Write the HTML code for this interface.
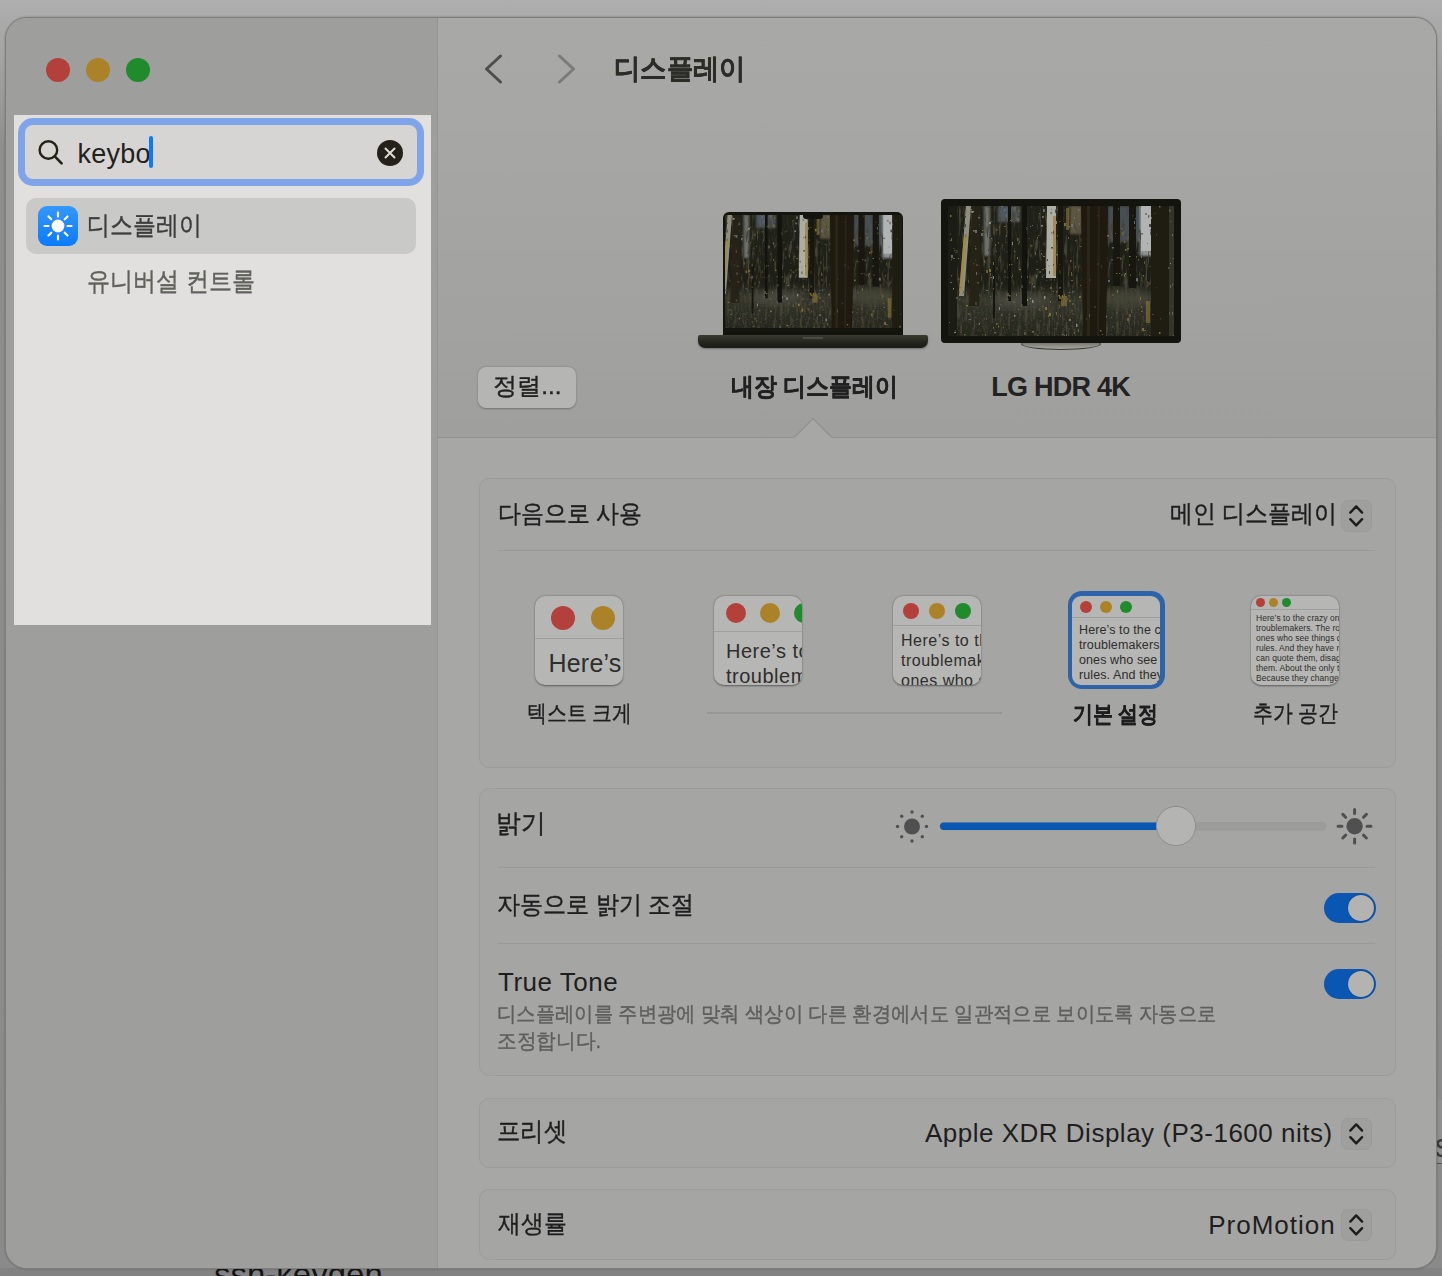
<!DOCTYPE html>
<html><head><meta charset="utf-8">
<style>
*{box-sizing:border-box;margin:0;padding:0}
html,body{width:1442px;height:1276px;overflow:hidden}
body{position:relative;font-family:"Liberation Sans",sans-serif;background:linear-gradient(#afafaf 0,#aaaaaa 20px,#a6a6a6 50px,#8e8e8e 150px,#8a8a8a 100%);color:#1e1e1e}
.abs{position:absolute}
#win{position:absolute;left:5px;top:17px;width:1432px;height:1252px;border-radius:22px;background:#a7a7a6;border:1px solid #7e7e7c;overflow:hidden;box-shadow:0 0 2px rgba(0,0,0,.3)}
#side{position:absolute;left:0;top:0;width:432px;height:100%;background:#9e9e9d;border-right:1px solid #959594}
#hdr{position:absolute;left:432px;top:0;right:0;height:420px;background:linear-gradient(#a8a8a7,#a7a7a6 22%,#9f9f9e);border-bottom:1px solid #90908f}
.tl{position:absolute;top:40px;width:24px;height:24px;border-radius:50%}
.t{position:absolute;white-space:nowrap;line-height:1;transform-origin:0 0}
.card{position:absolute;left:479px;width:917px;border-radius:10px;background:#a5a5a4;border:1px solid #9b9b9a}
.sep{position:absolute;left:498px;width:877px;height:1px;background:#999998}
.stepper{position:absolute;left:1341px;width:31px;height:32px;border-radius:7px;background:#9f9f9e;border:1px solid #9a9a99}
.toggle{position:absolute;left:1324px;width:52px;height:30px;border-radius:15px;background:#0a56b3}
.toggle::after{content:"";position:absolute;right:2px;top:2px;width:26px;height:26px;border-radius:50%;background:#b3b3b2;box-shadow:0 0 1px rgba(0,0,0,.5)}
.thumb{position:absolute;width:88px;height:89px;border-radius:10px;background:#b6b6b5;box-shadow:0 0.5px 2px rgba(0,0,0,.45);overflow:hidden}
.thumb .bar{position:absolute;left:0;right:0;height:1px;background:#9f9f9e}
.dot{position:absolute;border-radius:50%}
.r{background:#b3403a}.y{background:#ac8228}.g{background:#1f8b2d}
.t[style*="scaleX"]{-webkit-text-stroke:0.4px currentColor}
.t[style*="bold"][style*="scaleX"]{-webkit-text-stroke:0.3px currentColor}
.tt{position:absolute;color:#2e2e2a;white-space:nowrap}
</style></head><body>

<svg width="0" height="0" style="position:absolute">
 <defs>
  <g id="forestg">
<filter id="fn" color-interpolation-filters="sRGB" x="0" y="0" width="100%" height="100%"><feTurbulence type="fractalNoise" baseFrequency="0.35 0.06" numOctaves="3" seed="4"/><feColorMatrix values="0 0 0 0 0.27  0 0 0 0 0.26  0 0 0 0 0.2  0 0 0 -4 1.95"/></filter>
<filter id="fn2" color-interpolation-filters="sRGB" x="0" y="0" width="100%" height="100%"><feTurbulence type="fractalNoise" baseFrequency="0.5 0.5" numOctaves="2" seed="9"/><feColorMatrix values="0 0 0 0 0.3  0 0 0 0 0.3  0 0 0 0 0.24  0 0 0 -4 2.0"/></filter>
<linearGradient id="fg" x1="0" y1="0" x2="0" y2="1"><stop offset="0" stop-color="#202119"/><stop offset="0.6" stop-color="#1d1e16"/><stop offset="0.72" stop-color="#34352b"/><stop offset="0.85" stop-color="#2c2d24"/><stop offset="1" stop-color="#23241c"/></linearGradient>
<rect width="226" height="130" fill="url(#fg)"/>
<filter id="fs"><feGaussianBlur stdDeviation="1.2"/></filter><g filter="url(#fs)">
<rect x="50" y="0" width="22" height="16" fill="#4f5860"/>
<rect x="36" y="0" width="6" height="50" fill="#6d706c"/>
<rect x="160" y="0" width="32" height="36" fill="#464f55"/>
<rect x="192" y="0" width="12" height="50" fill="#8e9394"/>
<rect x="0" y="0" width="8" height="12" fill="#3b3f3c"/>
<rect x="122" y="0" width="12" height="28" fill="#5d5640"/>
</g>
<rect width="226" height="130" filter="url(#fn)"/>
<filter id="fb"><feGaussianBlur stdDeviation="4"/></filter>
<ellipse cx="72" cy="95" rx="30" ry="8" fill="#4d4e44" opacity="0.7" filter="url(#fb)"/>
<ellipse cx="180" cy="92" rx="24" ry="10" fill="#48483a" opacity="0.7" filter="url(#fb)"/>
<rect y="86" width="226" height="44" filter="url(#fn2)" opacity="0.5"/>
<polygon points="18,0 23,0 16,90 11,90" fill="#8f8e80"/>
<polygon points="16,30 19,30 14,85 11,85" fill="#a08a3a" opacity="0.8"/>
<polygon points="24,0 33,0 31,100 21,100" fill="#262216"/>
<polygon points="60,0 63,0 63,95 60,95" fill="#13130e"/>
<polygon points="74,0 79,0 79,100 74,100" fill="#13130e"/>
<polygon points="45,55 47,55 47,112 45,112" fill="#15150f"/>
<polygon points="99,0 108,0 108,72 98,72" fill="#aeada2"/>
<polygon points="105,10 108,10 108,70 105,70" fill="#9a8446" opacity="0.8"/>
<polygon points="110,0 115,0 115,95 110,95" fill="#17160f"/>
<polygon points="133,0 160,0 158,130 135,130" fill="#1e1a10"/>
<polygon points="139,0 142,0 142,130 139,130" fill="#2c2617"/>
<polygon points="150,0 152,0 151,130 149,130" fill="#29231a"/>
<polygon points="165,0 172,0 172,80 165,80" fill="#17160f"/>
<polygon points="181,0 188,0 188,82 181,82" fill="#17160f"/>
<polygon points="193,0 203,0 203,45 193,45" fill="#b0b4b4"/>
<polygon points="203,0 221,0 221,130 203,130" fill="#1f1c12"/>
<polygon points="221,0 226,0 226,130 221,130" fill="#36342a"/>
<polygon points="0,0 9,0 9,130 0,130" fill="#1b1c15"/>
<rect x="113" y="90" width="6" height="10" fill="#8e7634" opacity="0.6"/>
<rect x="198" y="95" width="4" height="22" fill="#8e7634" opacity="0.6"/>
<rect x="118" y="2" width="3" height="22" fill="#8e7634" opacity="0.6"/>
<rect x="102" y="73" width="2" height="1.5" fill="#4a4636" opacity="0.85"/>
<rect x="42" y="67" width="1" height="3" fill="#5e5a48" opacity="0.85"/>
<rect x="69" y="12" width="2" height="3" fill="#7a6a38" opacity="0.85"/>
<rect x="3" y="69" width="1" height="1.5" fill="#7a6a38" opacity="0.85"/>
<rect x="199" y="78" width="1.5" height="3" fill="#4a4636" opacity="0.85"/>
<rect x="66" y="1" width="1.5" height="3" fill="#7a6a38" opacity="0.85"/>
<rect x="225" y="129" width="1.5" height="2" fill="#7a6a38" opacity="0.85"/>
<rect x="171" y="67" width="1" height="1" fill="#7a6a38" opacity="0.85"/>
<rect x="90" y="110" width="1" height="1" fill="#3c3a2c" opacity="0.85"/>
<rect x="191" y="0" width="1" height="3" fill="#8c7a3a" opacity="0.85"/>
<rect x="85" y="92" width="1" height="1.5" fill="#4a4636" opacity="0.85"/>
<rect x="176" y="35" width="1.5" height="2" fill="#7a6a38" opacity="0.85"/>
<rect x="3" y="53" width="1" height="1.5" fill="#5e5a48" opacity="0.85"/>
<rect x="110" y="89" width="2" height="1.5" fill="#8c7a3a" opacity="0.85"/>
<rect x="223" y="100" width="2" height="1" fill="#4a4636" opacity="0.85"/>
<rect x="89" y="129" width="1.5" height="2" fill="#7a6a38" opacity="0.85"/>
<rect x="226" y="3" width="1" height="1" fill="#5e5a48" opacity="0.85"/>
<rect x="224" y="28" width="1" height="2" fill="#6e737a" opacity="0.85"/>
<rect x="188" y="50" width="1" height="1.5" fill="#7a6a38" opacity="0.85"/>
<rect x="132" y="32" width="1.5" height="3" fill="#3c3a2c" opacity="0.85"/>
<rect x="29" y="76" width="2" height="1.5" fill="#5e5a48" opacity="0.85"/>
<rect x="88" y="63" width="2" height="1" fill="#7a6a38" opacity="0.85"/>
<rect x="23" y="5" width="2" height="2" fill="#6a7888" opacity="0.85"/>
<rect x="95" y="118" width="1.5" height="1.5" fill="#4a4636" opacity="0.85"/>
<rect x="108" y="85" width="1.5" height="1.5" fill="#7a6a38" opacity="0.85"/>
<rect x="61" y="58" width="1" height="1.5" fill="#7a6a38" opacity="0.85"/>
<rect x="64" y="69" width="1" height="2" fill="#5e5a48" opacity="0.85"/>
<rect x="31" y="59" width="1" height="1" fill="#3c3a2c" opacity="0.85"/>
<rect x="70" y="4" width="1.5" height="2" fill="#7a6a38" opacity="0.85"/>
<rect x="31" y="9" width="1" height="1.5" fill="#4a4636" opacity="0.85"/>
<rect x="179" y="119" width="1" height="3" fill="#3c3a2c" opacity="0.85"/>
<rect x="179" y="112" width="2" height="3" fill="#7a6a38" opacity="0.85"/>
<rect x="132" y="79" width="1" height="1" fill="#7a6a38" opacity="0.85"/>
<rect x="224" y="114" width="2" height="3" fill="#3c3a2c" opacity="0.85"/>
<rect x="100" y="109" width="1" height="2" fill="#7a6a38" opacity="0.85"/>
<rect x="68" y="88" width="1" height="2" fill="#8c7a3a" opacity="0.85"/>
<rect x="149" y="57" width="2" height="2" fill="#3c3a2c" opacity="0.85"/>
<rect x="45" y="56" width="1" height="3" fill="#8c7a3a" opacity="0.85"/>
<rect x="50" y="120" width="1" height="1.5" fill="#8c7a3a" opacity="0.85"/>
<rect x="112" y="109" width="1" height="2" fill="#7a6a38" opacity="0.85"/>
<rect x="186" y="15" width="1" height="3" fill="#6a7888" opacity="0.85"/>
<rect x="86" y="68" width="2" height="2" fill="#3c3a2c" opacity="0.85"/>
<rect x="17" y="4" width="1.5" height="2" fill="#7a6a38" opacity="0.85"/>
<rect x="70" y="103" width="1" height="3" fill="#7a6a38" opacity="0.85"/>
<rect x="103" y="3" width="1" height="1" fill="#6a7888" opacity="0.85"/>
<rect x="222" y="15" width="1.5" height="1" fill="#5e5a48" opacity="0.85"/>
<rect x="40" y="1" width="1" height="1.5" fill="#4a4636" opacity="0.85"/>
<rect x="51" y="101" width="1" height="3" fill="#9a9a90" opacity="0.85"/>
<rect x="192" y="91" width="1" height="3" fill="#8c7a3a" opacity="0.85"/>
<rect x="102" y="81" width="2" height="2" fill="#7a6a38" opacity="0.85"/>
<rect x="105" y="85" width="1" height="1" fill="#8c7a3a" opacity="0.85"/>
<rect x="48" y="117" width="1.5" height="2" fill="#7a6a38" opacity="0.85"/>
<rect x="59" y="93" width="1.5" height="1" fill="#7a6a38" opacity="0.85"/>
<rect x="8" y="44" width="1.5" height="3" fill="#4a4636" opacity="0.85"/>
<rect x="208" y="28" width="1" height="1.5" fill="#4a4636" opacity="0.85"/>
<rect x="120" y="89" width="2" height="1.5" fill="#5e5a48" opacity="0.85"/>
<rect x="226" y="117" width="2" height="3" fill="#9a9a90" opacity="0.85"/>
<rect x="131" y="90" width="2" height="2" fill="#8c7a3a" opacity="0.85"/>
<rect x="188" y="73" width="1.5" height="2" fill="#5e5a48" opacity="0.85"/>
<rect x="152" y="124" width="1.5" height="1.5" fill="#8c7a3a" opacity="0.85"/>
<rect x="45" y="70" width="1" height="3" fill="#9a9a90" opacity="0.85"/>
<rect x="6" y="126" width="2" height="1" fill="#9a9a90" opacity="0.85"/>
<rect x="111" y="90" width="2" height="3" fill="#7a6a38" opacity="0.85"/>
<rect x="56" y="64" width="2" height="3" fill="#3c3a2c" opacity="0.85"/>
<rect x="119" y="14" width="1.5" height="1.5" fill="#4a4636" opacity="0.85"/>
<rect x="35" y="2" width="1.5" height="1.5" fill="#3c3a2c" opacity="0.85"/>
<rect x="28" y="66" width="1" height="3" fill="#6e737a" opacity="0.85"/>
<rect x="5" y="82" width="1" height="1.5" fill="#9a9a90" opacity="0.85"/>
<rect x="195" y="69" width="1" height="1.5" fill="#8c7a3a" opacity="0.85"/>
<rect x="53" y="96" width="1" height="2" fill="#3c3a2c" opacity="0.85"/>
<rect x="176" y="25" width="1" height="1.5" fill="#5e5a48" opacity="0.85"/>
<rect x="30" y="11" width="2" height="1.5" fill="#6a7888" opacity="0.85"/>
<rect x="45" y="82" width="1" height="1.5" fill="#7a6a38" opacity="0.85"/>
<rect x="129" y="46" width="1" height="2" fill="#3c3a2c" opacity="0.85"/>
<rect x="114" y="89" width="1" height="3" fill="#8c7a3a" opacity="0.85"/>
<rect x="24" y="5" width="2" height="1.5" fill="#9a9a90" opacity="0.85"/>
<rect x="43" y="15" width="1.5" height="1" fill="#5e5a48" opacity="0.85"/>
<rect x="131" y="17" width="1" height="2" fill="#6a7888" opacity="0.85"/>
<rect x="88" y="55" width="2" height="1.5" fill="#3c3a2c" opacity="0.85"/>
<rect x="191" y="24" width="1.5" height="3" fill="#4a4636" opacity="0.85"/>
<rect x="179" y="42" width="2" height="1.5" fill="#7a6a38" opacity="0.85"/>
<rect x="114" y="128" width="1.5" height="1" fill="#6e737a" opacity="0.85"/>
<rect x="168" y="101" width="1" height="2" fill="#3c3a2c" opacity="0.85"/>
<rect x="199" y="90" width="1" height="3" fill="#4a4636" opacity="0.85"/>
<rect x="47" y="24" width="1" height="1" fill="#3c3a2c" opacity="0.85"/>
<rect x="201" y="129" width="1" height="2" fill="#7a6a38" opacity="0.85"/>
<rect x="88" y="130" width="1" height="3" fill="#8c7a3a" opacity="0.85"/>
<rect x="221" y="3" width="1.5" height="3" fill="#5e5a48" opacity="0.85"/>
<rect x="91" y="7" width="1" height="1" fill="#8c7a3a" opacity="0.85"/>
<rect x="58" y="36" width="2" height="1" fill="#3c3a2c" opacity="0.85"/>
<rect x="38" y="64" width="2" height="3" fill="#7a6a38" opacity="0.85"/>
<rect x="95" y="68" width="1.5" height="2" fill="#3c3a2c" opacity="0.85"/>
<rect x="109" y="35" width="1.5" height="1" fill="#3c3a2c" opacity="0.85"/>
<rect x="3" y="32" width="1" height="3" fill="#7a6a38" opacity="0.85"/>
<rect x="171" y="51" width="2" height="1" fill="#3c3a2c" opacity="0.85"/>
<rect x="131" y="94" width="1" height="1.5" fill="#3c3a2c" opacity="0.85"/>
<rect x="97" y="62" width="1" height="1" fill="#8c7a3a" opacity="0.85"/>
<rect x="221" y="106" width="1" height="3" fill="#5e5a48" opacity="0.85"/>
<rect x="103" y="26" width="1.5" height="1.5" fill="#7a6a38" opacity="0.85"/>
<rect x="28" y="58" width="2" height="2" fill="#4a4636" opacity="0.85"/>
<rect x="168" y="106" width="1.5" height="1.5" fill="#5e5a48" opacity="0.85"/>
<rect x="54" y="15" width="1.5" height="2" fill="#3c3a2c" opacity="0.85"/>
<rect x="61" y="89" width="1.5" height="1.5" fill="#8c7a3a" opacity="0.85"/>
<rect x="43" y="32" width="1" height="1" fill="#8c7a3a" opacity="0.85"/>
<rect x="2" y="34" width="1" height="1" fill="#7a6a38" opacity="0.85"/>
<rect x="50" y="36" width="1" height="1.5" fill="#7a6a38" opacity="0.85"/>
<rect x="48" y="45" width="1" height="1" fill="#5e5a48" opacity="0.85"/>
<rect x="101" y="107" width="2" height="3" fill="#8c7a3a" opacity="0.85"/>
<rect x="169" y="51" width="1.5" height="1.5" fill="#5e5a48" opacity="0.85"/>
<rect x="124" y="97" width="2" height="2" fill="#5e5a48" opacity="0.85"/>
<rect x="131" y="60" width="1" height="1" fill="#3c3a2c" opacity="0.85"/>
<rect x="98" y="74" width="1.5" height="1" fill="#4a4636" opacity="0.85"/>
<rect x="17" y="28" width="1.5" height="3" fill="#7a6a38" opacity="0.85"/>
<rect x="164" y="90" width="1" height="1.5" fill="#3c3a2c" opacity="0.85"/>
<rect x="81" y="94" width="1" height="2" fill="#3c3a2c" opacity="0.85"/>
<rect x="160" y="74" width="2" height="2" fill="#6e737a" opacity="0.85"/>
<rect x="104" y="29" width="1" height="1" fill="#9a9a90" opacity="0.85"/>
<rect x="82" y="48" width="2" height="3" fill="#3c3a2c" opacity="0.85"/>
<rect x="180" y="96" width="2" height="1.5" fill="#3c3a2c" opacity="0.85"/>
<rect x="189" y="73" width="1" height="3" fill="#5e5a48" opacity="0.85"/>
<rect x="199" y="37" width="1" height="1" fill="#7a6a38" opacity="0.85"/>
<rect x="123" y="74" width="2" height="1" fill="#7a6a38" opacity="0.85"/>
<rect x="132" y="40" width="1.5" height="1" fill="#7a6a38" opacity="0.85"/>
<rect x="62" y="14" width="1" height="1" fill="#6a7888" opacity="0.85"/>
<rect x="169" y="84" width="1" height="3" fill="#8c7a3a" opacity="0.85"/>
<rect x="173" y="68" width="2" height="2" fill="#4a4636" opacity="0.85"/>
<rect x="76" y="126" width="2" height="3" fill="#5e5a48" opacity="0.85"/>
<rect x="121" y="94" width="2" height="2" fill="#7a6a38" opacity="0.85"/>
<rect x="193" y="105" width="2" height="1" fill="#7a6a38" opacity="0.85"/>
<rect x="118" y="92" width="2" height="3" fill="#5e5a48" opacity="0.85"/>
<rect x="88" y="69" width="1" height="3" fill="#6e737a" opacity="0.85"/>
<rect x="70" y="15" width="1" height="1" fill="#5e5a48" opacity="0.85"/>
<rect x="170" y="2" width="1" height="2" fill="#4a4636" opacity="0.85"/>
<rect x="25" y="24" width="2" height="1.5" fill="#8c7a3a" opacity="0.85"/>
<rect x="100" y="116" width="1" height="2" fill="#3c3a2c" opacity="0.85"/>
<rect x="193" y="63" width="1.5" height="1" fill="#3c3a2c" opacity="0.85"/>
<rect x="109" y="29" width="1" height="1.5" fill="#7a6a38" opacity="0.85"/>
<rect x="181" y="50" width="1.5" height="1" fill="#9a9a90" opacity="0.85"/>
<rect x="107" y="48" width="2" height="1.5" fill="#8c7a3a" opacity="0.85"/>
<rect x="94" y="100" width="1.5" height="1.5" fill="#5e5a48" opacity="0.85"/>
<rect x="121" y="20" width="1" height="1.5" fill="#6a7888" opacity="0.85"/>
<rect x="19" y="35" width="1" height="3" fill="#9a9a90" opacity="0.85"/>
<rect x="123" y="66" width="1" height="3" fill="#7a6a38" opacity="0.85"/>
<rect x="44" y="89" width="1" height="1" fill="#4a4636" opacity="0.85"/>
<rect x="123" y="68" width="1.5" height="2" fill="#5e5a48" opacity="0.85"/>
<rect x="70" y="10" width="1" height="2" fill="#3c3a2c" opacity="0.85"/>
<rect x="17" y="18" width="1" height="3" fill="#3c3a2c" opacity="0.85"/>
<rect x="3" y="49" width="1" height="2" fill="#4a4636" opacity="0.85"/>
<rect x="127" y="60" width="1" height="1.5" fill="#7a6a38" opacity="0.85"/>
<rect x="66" y="49" width="1.5" height="3" fill="#3c3a2c" opacity="0.85"/>
<rect x="126" y="11" width="1" height="2" fill="#6a7888" opacity="0.85"/>
<rect x="70" y="36" width="1.5" height="3" fill="#4a4636" opacity="0.85"/>
<rect x="187" y="12" width="1" height="1.5" fill="#5e5a48" opacity="0.85"/>
<rect x="41" y="52" width="1" height="1" fill="#4a4636" opacity="0.85"/>
<rect x="51" y="20" width="1" height="2" fill="#5e5a48" opacity="0.85"/>
<rect x="146" y="100" width="2" height="2" fill="#3c3a2c" opacity="0.85"/>
<rect x="208" y="81" width="1" height="1" fill="#3c3a2c" opacity="0.85"/>
<rect x="59" y="25" width="1" height="3" fill="#3c3a2c" opacity="0.85"/>
<rect x="46" y="43" width="1" height="1.5" fill="#3c3a2c" opacity="0.85"/>
<rect x="57" y="70" width="1" height="2" fill="#3c3a2c" opacity="0.85"/>
<rect x="45" y="121" width="1" height="1.5" fill="#8c7a3a" opacity="0.85"/>
<rect x="176" y="18" width="1.5" height="2" fill="#4a4636" opacity="0.85"/>
<rect x="21" y="113" width="2" height="1" fill="#6e737a" opacity="0.85"/>
<rect x="102" y="95" width="1" height="2" fill="#8c7a3a" opacity="0.85"/>
<rect x="38" y="97" width="1" height="1" fill="#3c3a2c" opacity="0.85"/>
<rect x="211" y="0" width="1.5" height="1.5" fill="#6a7888" opacity="0.85"/>
<rect x="42" y="71" width="2" height="1" fill="#7a6a38" opacity="0.85"/>
<rect x="91" y="102" width="1.5" height="3" fill="#5e5a48" opacity="0.85"/>
<rect x="36" y="54" width="1" height="3" fill="#7a6a38" opacity="0.85"/>
<rect x="27" y="53" width="1" height="2" fill="#3c3a2c" opacity="0.85"/>
<rect x="55" y="121" width="1" height="1.5" fill="#7a6a38" opacity="0.85"/>
<rect x="91" y="65" width="2" height="2" fill="#5e5a48" opacity="0.85"/>
<rect x="93" y="81" width="1.5" height="3" fill="#4a4636" opacity="0.85"/>
<rect x="201" y="60" width="2" height="1" fill="#4a4636" opacity="0.85"/>
<rect x="128" y="118" width="1.5" height="3" fill="#9a9a90" opacity="0.85"/>
<rect x="95" y="3" width="2" height="3" fill="#6a7888" opacity="0.85"/>
<rect x="101" y="65" width="1" height="3" fill="#3c3a2c" opacity="0.85"/>
<rect x="69" y="51" width="1" height="2" fill="#8c7a3a" opacity="0.85"/>
<rect x="196" y="55" width="1" height="3" fill="#5e5a48" opacity="0.85"/>
<rect x="128" y="117" width="1" height="1" fill="#5e5a48" opacity="0.85"/>
<rect x="199" y="75" width="1" height="2" fill="#4a4636" opacity="0.85"/>
<rect x="55" y="39" width="1" height="1" fill="#3c3a2c" opacity="0.85"/>
<rect x="100" y="59" width="2" height="1.5" fill="#9a9a90" opacity="0.85"/>
<rect x="81" y="76" width="1.5" height="1" fill="#7a6a38" opacity="0.85"/>
<rect x="103" y="41" width="2" height="1.5" fill="#3c3a2c" opacity="0.85"/>
<rect x="47" y="38" width="1" height="2" fill="#7a6a38" opacity="0.85"/>
<rect x="189" y="46" width="1" height="1.5" fill="#4a4636" opacity="0.85"/>
<rect x="120" y="31" width="1" height="2" fill="#7a6a38" opacity="0.85"/>
<rect x="164" y="41" width="2" height="1.5" fill="#6e737a" opacity="0.85"/>
<rect x="76" y="124" width="2" height="1" fill="#4a4636" opacity="0.85"/>
<rect x="38" y="112" width="1" height="2" fill="#5e5a48" opacity="0.85"/>
<rect x="41" y="31" width="1.5" height="2" fill="#3c3a2c" opacity="0.85"/>
<rect x="182" y="68" width="1" height="2" fill="#5e5a48" opacity="0.85"/>
<rect x="202" y="23" width="1" height="3" fill="#6a7888" opacity="0.85"/>
<rect x="222" y="57" width="1" height="1" fill="#9a9a90" opacity="0.85"/>
<rect x="2" y="76" width="2" height="1" fill="#6e737a" opacity="0.85"/>
<rect x="37" y="128" width="1" height="1.5" fill="#8c7a3a" opacity="0.85"/>
<rect x="63" y="71" width="1" height="1" fill="#5e5a48" opacity="0.85"/>
<rect x="1" y="116" width="1" height="1" fill="#7a6a38" opacity="0.85"/>
<rect x="126" y="84" width="1.5" height="3" fill="#3c3a2c" opacity="0.85"/>
<rect x="177" y="67" width="1" height="1.5" fill="#9a9a90" opacity="0.85"/>
<rect x="25" y="57" width="1.5" height="1.5" fill="#4a4636" opacity="0.85"/>
<rect x="59" y="71" width="1.5" height="1" fill="#4a4636" opacity="0.85"/>
<rect x="46" y="126" width="2" height="1.5" fill="#7a6a38" opacity="0.85"/>
<rect x="73" y="79" width="2" height="3" fill="#4a4636" opacity="0.85"/>
<rect x="163" y="111" width="1" height="1" fill="#7a6a38" opacity="0.85"/>
<rect x="179" y="31" width="1" height="2" fill="#5e5a48" opacity="0.85"/>
<rect x="96" y="90" width="1.5" height="3" fill="#9a9a90" opacity="0.85"/>
<rect x="20" y="107" width="2" height="2" fill="#5e5a48" opacity="0.85"/>
<rect x="56" y="65" width="1" height="2" fill="#4a4636" opacity="0.85"/>
<rect x="93" y="47" width="1" height="1.5" fill="#8c7a3a" opacity="0.85"/>
<rect x="111" y="99" width="1" height="3" fill="#5e5a48" opacity="0.85"/>
<rect x="118" y="128" width="1" height="3" fill="#7a6a38" opacity="0.85"/>
<rect x="201" y="18" width="2" height="3" fill="#3c3a2c" opacity="0.85"/>
<rect x="211" y="126" width="1.5" height="2" fill="#8c7a3a" opacity="0.85"/>
<rect x="27" y="111" width="2" height="1" fill="#4a4636" opacity="0.85"/>
<rect x="222" y="79" width="1" height="3" fill="#7a6a38" opacity="0.85"/>
<rect x="132" y="129" width="1" height="3" fill="#3c3a2c" opacity="0.85"/>
<rect x="194" y="122" width="2" height="3" fill="#8c7a3a" opacity="0.85"/>
<rect x="177" y="28" width="1" height="1.5" fill="#3c3a2c" opacity="0.85"/>
<rect x="179" y="105" width="1" height="3" fill="#4a4636" opacity="0.85"/>
<rect x="48" y="61" width="2" height="3" fill="#3c3a2c" opacity="0.85"/>
<rect x="111" y="81" width="2" height="1.5" fill="#5e5a48" opacity="0.85"/>
<rect x="122" y="54" width="1.5" height="2" fill="#7a6a38" opacity="0.85"/>
<rect x="168" y="67" width="1.5" height="1" fill="#8c7a3a" opacity="0.85"/>
<rect x="82" y="20" width="1" height="1" fill="#6a7888" opacity="0.85"/>
<rect x="5" y="42" width="2" height="1" fill="#3c3a2c" opacity="0.85"/>
<rect x="193" y="50" width="1" height="2" fill="#6e737a" opacity="0.85"/>
<rect x="89" y="31" width="1" height="1.5" fill="#7a6a38" opacity="0.85"/>
<rect x="116" y="17" width="2" height="3" fill="#8c7a3a" opacity="0.85"/>
<rect x="123" y="18" width="2" height="3" fill="#6e737a" opacity="0.85"/>
<rect x="33" y="27" width="2" height="3" fill="#6e737a" opacity="0.85"/>
<rect x="31" y="67" width="1" height="1" fill="#3c3a2c" opacity="0.85"/>
<rect x="66" y="45" width="1" height="1" fill="#8c7a3a" opacity="0.85"/>
<rect x="192" y="97" width="1" height="2" fill="#4a4636" opacity="0.85"/>
<rect x="149" y="9" width="1.5" height="1.5" fill="#3c3a2c" opacity="0.85"/>
<rect x="177" y="34" width="1" height="3" fill="#4a4636" opacity="0.85"/>
<rect x="111" y="64" width="1.5" height="3" fill="#3c3a2c" opacity="0.85"/>
<rect x="159" y="29" width="2" height="1.5" fill="#8c7a3a" opacity="0.85"/>
<rect x="79" y="93" width="1" height="2" fill="#9a9a90" opacity="0.85"/>
<rect x="58" y="111" width="1" height="3" fill="#3c3a2c" opacity="0.85"/>
<rect x="27" y="118" width="1.5" height="1" fill="#3c3a2c" opacity="0.85"/>
<rect x="85" y="110" width="2" height="2" fill="#3c3a2c" opacity="0.85"/>
<rect x="200" y="9" width="1.5" height="2" fill="#7a6a38" opacity="0.85"/>
<rect x="59" y="87" width="2" height="3" fill="#5e5a48" opacity="0.85"/>
<rect x="130" y="123" width="1" height="3" fill="#7a6a38" opacity="0.85"/>
<rect x="105" y="58" width="1" height="1.5" fill="#3c3a2c" opacity="0.85"/>
<rect x="107" y="3" width="1.5" height="1.5" fill="#6a7888" opacity="0.85"/>
<rect x="53" y="0" width="2" height="1" fill="#6a7888" opacity="0.85"/>
<rect x="141" y="73" width="1.5" height="2" fill="#3c3a2c" opacity="0.85"/>
<rect x="23" y="3" width="1" height="1.5" fill="#8c7a3a" opacity="0.85"/>
<rect x="186" y="21" width="1.5" height="2" fill="#4a4636" opacity="0.85"/>
<rect x="94" y="48" width="1" height="1.5" fill="#4a4636" opacity="0.85"/>
<rect x="82" y="92" width="1" height="1" fill="#9a9a90" opacity="0.85"/>
<rect x="224" y="106" width="1" height="3" fill="#3c3a2c" opacity="0.85"/>
<rect x="116" y="88" width="1" height="3" fill="#7a6a38" opacity="0.85"/>
<rect x="197" y="7" width="2" height="2" fill="#6e737a" opacity="0.85"/>
<rect x="162" y="33" width="1" height="2" fill="#3c3a2c" opacity="0.85"/>
<rect x="193" y="27" width="2" height="1.5" fill="#5e5a48" opacity="0.85"/>
<rect x="141" y="108" width="1" height="3" fill="#5e5a48" opacity="0.85"/>
<rect x="220" y="61" width="1.5" height="2" fill="#5e5a48" opacity="0.85"/>
<rect x="95" y="82" width="2" height="1.5" fill="#3c3a2c" opacity="0.85"/>
<rect x="11" y="93" width="1" height="1.5" fill="#5e5a48" opacity="0.85"/>
<rect x="65" y="95" width="2" height="2" fill="#5e5a48" opacity="0.85"/>
<rect x="204" y="108" width="1.5" height="1" fill="#5e5a48" opacity="0.85"/>
<rect x="70" y="104" width="1" height="3" fill="#3c3a2c" opacity="0.85"/>
<rect x="163" y="53" width="2" height="1.5" fill="#5e5a48" opacity="0.85"/>
<rect x="123" y="104" width="2" height="1.5" fill="#5e5a48" opacity="0.85"/>
<rect x="188" y="72" width="2" height="3" fill="#6e737a" opacity="0.85"/>
<rect x="27" y="42" width="1.5" height="1.5" fill="#7a6a38" opacity="0.85"/>
<rect x="62" y="52" width="1" height="1" fill="#3c3a2c" opacity="0.85"/>
<rect x="109" y="48" width="1" height="1.5" fill="#6e737a" opacity="0.85"/>
<rect x="15" y="116" width="1" height="1" fill="#3c3a2c" opacity="0.85"/>
<rect x="41" y="63" width="2" height="3" fill="#8c7a3a" opacity="0.85"/>
<rect x="7" y="46" width="1" height="1.5" fill="#3c3a2c" opacity="0.85"/>
<rect x="124" y="85" width="1.5" height="1.5" fill="#6e737a" opacity="0.85"/>
<rect x="212" y="112" width="1" height="1.5" fill="#4a4636" opacity="0.85"/>
<rect x="194" y="123" width="1" height="2" fill="#5e5a48" opacity="0.85"/>
<rect x="81" y="98" width="1" height="3" fill="#3c3a2c" opacity="0.85"/>
<rect x="2" y="27" width="1" height="2" fill="#3c3a2c" opacity="0.85"/>
<rect x="183" y="103" width="2" height="2" fill="#4a4636" opacity="0.85"/>
<rect x="181" y="108" width="2" height="3" fill="#5e5a48" opacity="0.85"/>
<rect x="190" y="53" width="1" height="1.5" fill="#7a6a38" opacity="0.85"/>
<rect x="51" y="50" width="1.5" height="2" fill="#3c3a2c" opacity="0.85"/>
<rect x="15" y="85" width="1.5" height="2" fill="#5e5a48" opacity="0.85"/>
<rect x="48" y="23" width="1.5" height="1.5" fill="#7a6a38" opacity="0.85"/>
<rect x="40" y="14" width="1" height="3" fill="#5e5a48" opacity="0.85"/>
<rect x="5" y="52" width="2" height="1" fill="#7a6a38" opacity="0.85"/>
<rect x="73" y="70" width="1" height="1.5" fill="#8c7a3a" opacity="0.85"/>
<rect x="73" y="98" width="1.5" height="3" fill="#5e5a48" opacity="0.85"/>
<rect x="107" y="122" width="2" height="1.5" fill="#4a4636" opacity="0.85"/>
<rect x="184" y="9" width="1.5" height="1.5" fill="#3c3a2c" opacity="0.85"/>
<rect x="176" y="68" width="1" height="3" fill="#7a6a38" opacity="0.85"/>
<rect x="206" y="7" width="2" height="1" fill="#3c3a2c" opacity="0.85"/>
<rect x="27" y="96" width="2" height="3" fill="#4a4636" opacity="0.85"/>
<rect x="95" y="50" width="2" height="1" fill="#8c7a3a" opacity="0.85"/>
<rect x="116" y="4" width="1" height="1" fill="#4a4636" opacity="0.85"/>
<rect x="224" y="96" width="1" height="3" fill="#3c3a2c" opacity="0.85"/>
<rect x="224" y="52" width="2" height="1" fill="#5e5a48" opacity="0.85"/>
<rect x="53" y="109" width="1" height="1" fill="#5e5a48" opacity="0.85"/>
<rect x="116" y="129" width="1" height="1" fill="#7a6a38" opacity="0.85"/>
<rect x="161" y="33" width="2" height="1.5" fill="#3c3a2c" opacity="0.85"/>
<rect x="121" y="113" width="2" height="2" fill="#8c7a3a" opacity="0.85"/>
<rect x="100" y="98" width="1" height="3" fill="#8c7a3a" opacity="0.85"/>
<rect x="193" y="100" width="1" height="2" fill="#7a6a38" opacity="0.85"/>
<rect x="40" y="43" width="1" height="2" fill="#3c3a2c" opacity="0.85"/>
<rect x="27" y="24" width="2" height="3" fill="#6a7888" opacity="0.85"/>
<rect x="16" y="128" width="1.5" height="1.5" fill="#8c7a3a" opacity="0.85"/>
<rect x="127" y="129" width="1" height="2" fill="#3c3a2c" opacity="0.85"/>
<rect x="158" y="110" width="1" height="1.5" fill="#8c7a3a" opacity="0.85"/>
<rect x="173" y="22" width="1.5" height="1" fill="#6a7888" opacity="0.85"/>
<rect x="58" y="45" width="1.5" height="1.5" fill="#3c3a2c" opacity="0.85"/>
<rect x="2" y="9" width="1.5" height="2" fill="#8c7a3a" opacity="0.85"/>
<rect x="174" y="26" width="1.5" height="3" fill="#7a6a38" opacity="0.85"/>
<rect x="85" y="80" width="2" height="1.5" fill="#6e737a" opacity="0.85"/>
<rect x="114" y="122" width="2" height="1.5" fill="#3c3a2c" opacity="0.85"/>
<rect x="111" y="15" width="1.5" height="1" fill="#5e5a48" opacity="0.85"/>
<rect x="153" y="59" width="1" height="3" fill="#3c3a2c" opacity="0.85"/>
<rect x="95" y="37" width="1.5" height="2" fill="#4a4636" opacity="0.85"/>
<rect x="3" y="49" width="2" height="3" fill="#6e737a" opacity="0.85"/>
<rect x="63" y="13" width="1" height="3" fill="#5e5a48" opacity="0.85"/>
<rect x="203" y="11" width="1" height="2" fill="#6a7888" opacity="0.85"/>
<rect x="224" y="106" width="1" height="3" fill="#7a6a38" opacity="0.85"/>
<rect x="16" y="22" width="1" height="1.5" fill="#9a9a90" opacity="0.85"/>
<rect x="187" y="84" width="1" height="1" fill="#5e5a48" opacity="0.85"/>
<rect x="226" y="85" width="1" height="3" fill="#8c7a3a" opacity="0.85"/>
<rect x="84" y="19" width="1" height="1" fill="#6a7888" opacity="0.85"/>
<rect x="38" y="84" width="2" height="1" fill="#6e737a" opacity="0.85"/>
<rect x="98" y="20" width="1" height="1" fill="#3c3a2c" opacity="0.85"/>
<rect x="79" y="70" width="1" height="2" fill="#5e5a48" opacity="0.85"/>
<rect x="226" y="73" width="1" height="1.5" fill="#7a6a38" opacity="0.85"/>
<rect x="80" y="32" width="2" height="1" fill="#4a4636" opacity="0.85"/>
<rect x="224" y="77" width="1" height="3" fill="#5e5a48" opacity="0.85"/>
<rect x="31" y="117" width="1" height="1.5" fill="#9a9a90" opacity="0.85"/>
<rect x="138" y="112" width="1" height="1.5" fill="#4a4636" opacity="0.85"/>
<rect x="35" y="106" width="1" height="2" fill="#3c3a2c" opacity="0.85"/>
<rect x="120" y="4" width="1" height="3" fill="#5e5a48" opacity="0.85"/>
<rect x="94" y="10" width="2" height="2" fill="#6e737a" opacity="0.85"/>
<rect x="202" y="26" width="1" height="3" fill="#5e5a48" opacity="0.85"/>
<rect x="50" y="11" width="2" height="2" fill="#4a4636" opacity="0.85"/>
<rect x="102" y="6" width="2" height="2" fill="#6a7888" opacity="0.85"/>
<rect x="90" y="29" width="1.5" height="1" fill="#5e5a48" opacity="0.85"/>
<rect x="71" y="63" width="2" height="1" fill="#8c7a3a" opacity="0.85"/>
<rect x="84" y="77" width="1" height="2" fill="#5e5a48" opacity="0.85"/>
<rect x="83" y="39" width="1.5" height="1.5" fill="#7a6a38" opacity="0.85"/>
<rect x="112" y="67" width="1" height="1" fill="#3c3a2c" opacity="0.85"/>
<rect x="48" y="77" width="1.5" height="3" fill="#4a4636" opacity="0.85"/>
<rect x="20" y="74" width="1" height="3" fill="#5e5a48" opacity="0.85"/>
<rect x="222" y="108" width="1" height="2" fill="#3c3a2c" opacity="0.85"/>
<rect x="34" y="20" width="1" height="3" fill="#3c3a2c" opacity="0.85"/>
<rect x="11" y="81" width="1.5" height="1" fill="#5e5a48" opacity="0.85"/>
<rect x="124" y="107" width="2" height="2" fill="#4a4636" opacity="0.85"/>
<rect x="154" y="128" width="1" height="1" fill="#7a6a38" opacity="0.85"/>
<rect x="100" y="98" width="2" height="3" fill="#3c3a2c" opacity="0.85"/>
<rect x="181" y="58" width="1" height="2" fill="#7a6a38" opacity="0.85"/>
<rect x="27" y="40" width="1" height="1" fill="#5e5a48" opacity="0.85"/>
<rect x="94" y="70" width="1" height="2" fill="#5e5a48" opacity="0.85"/>
<rect x="107" y="4" width="1" height="3" fill="#4a4636" opacity="0.85"/>
<rect x="112" y="90" width="2" height="1" fill="#3c3a2c" opacity="0.85"/>
<rect x="124" y="111" width="1" height="1" fill="#3c3a2c" opacity="0.85"/>
<rect x="78" y="21" width="2" height="3" fill="#3c3a2c" opacity="0.85"/>
<rect x="130" y="109" width="1" height="3" fill="#3c3a2c" opacity="0.85"/>
<rect x="111" y="82" width="2" height="1" fill="#3c3a2c" opacity="0.85"/>
<rect x="58" y="8" width="1" height="3" fill="#6e737a" opacity="0.85"/>
<rect x="94" y="69" width="2" height="1" fill="#3c3a2c" opacity="0.85"/>
<rect x="52" y="98" width="1.5" height="1.5" fill="#5e5a48" opacity="0.85"/>
<rect x="8" y="91" width="2" height="2" fill="#5e5a48" opacity="0.85"/>
<rect x="111" y="58" width="1.5" height="1" fill="#3c3a2c" opacity="0.85"/>
<rect x="56" y="20" width="1.5" height="1" fill="#8c7a3a" opacity="0.85"/>
<rect x="37" y="25" width="1.5" height="2" fill="#5e5a48" opacity="0.85"/>
<rect x="82" y="124" width="1.5" height="1" fill="#3c3a2c" opacity="0.85"/>
<rect x="56" y="3" width="1.5" height="2" fill="#6e737a" opacity="0.85"/>
<rect x="127" y="34" width="1.5" height="1" fill="#7a6a38" opacity="0.85"/>
<rect x="64" y="36" width="1" height="3" fill="#9a9a90" opacity="0.85"/>
<rect x="36" y="112" width="1" height="1.5" fill="#5e5a48" opacity="0.85"/>
<rect x="121" y="86" width="1.5" height="1" fill="#6e737a" opacity="0.85"/>
<rect x="97" y="101" width="2" height="3" fill="#8c7a3a" opacity="0.85"/>
<rect x="200" y="10" width="1" height="2" fill="#5e5a48" opacity="0.85"/>
<rect x="27" y="129" width="1.5" height="1.5" fill="#3c3a2c" opacity="0.85"/>
<rect x="14" y="87" width="1" height="1" fill="#7a6a38" opacity="0.85"/>
<rect x="93" y="19" width="2" height="1.5" fill="#9a9a90" opacity="0.85"/>
<rect x="19" y="90" width="1" height="1" fill="#4a4636" opacity="0.85"/>
<rect x="94" y="63" width="2" height="1" fill="#7a6a38" opacity="0.85"/>
<rect x="126" y="126" width="1" height="2" fill="#7a6a38" opacity="0.85"/>
<rect x="58" y="29" width="1" height="1.5" fill="#6e737a" opacity="0.85"/>
<rect x="194" y="122" width="2" height="2" fill="#7a6a38" opacity="0.85"/>
<rect x="196" y="124" width="2" height="1" fill="#7a6a38" opacity="0.85"/>
<rect x="34" y="24" width="1" height="1" fill="#9a9a90" opacity="0.85"/>
<rect x="84" y="125" width="2" height="1.5" fill="#8c7a3a" opacity="0.85"/>
<rect x="92" y="44" width="2" height="1" fill="#3c3a2c" opacity="0.85"/>
<rect x="84" y="94" width="1.5" height="3" fill="#9a9a90" opacity="0.85"/>
<rect x="45" y="27" width="2" height="1.5" fill="#4a4636" opacity="0.85"/>
<rect x="177" y="43" width="1.5" height="2" fill="#8c7a3a" opacity="0.85"/>
<rect x="130" y="3" width="1.5" height="2" fill="#6a7888" opacity="0.85"/>
<rect x="167" y="27" width="1" height="1" fill="#7a6a38" opacity="0.85"/>
<rect x="18" y="99" width="2" height="1.5" fill="#8c7a3a" opacity="0.85"/>
<rect x="10" y="72" width="1.5" height="2" fill="#5e5a48" opacity="0.85"/>
<rect x="16" y="10" width="2" height="1.5" fill="#3c3a2c" opacity="0.85"/>
<rect x="76" y="103" width="1.5" height="1" fill="#3c3a2c" opacity="0.85"/>
<rect x="108" y="106" width="1" height="3" fill="#7a6a38" opacity="0.85"/>
<rect x="7" y="124" width="1" height="1.5" fill="#4a4636" opacity="0.85"/>
<rect x="15" y="21" width="1.5" height="2" fill="#4a4636" opacity="0.85"/>
<rect x="31" y="18" width="1" height="1.5" fill="#3c3a2c" opacity="0.85"/>
<rect x="31" y="88" width="1.5" height="2" fill="#4a4636" opacity="0.85"/>
<rect x="164" y="120" width="1" height="1.5" fill="#5e5a48" opacity="0.85"/>
<rect x="164" y="88" width="1.5" height="2" fill="#5e5a48" opacity="0.85"/>
<rect x="41" y="16" width="2" height="2" fill="#9a9a90" opacity="0.85"/>
<rect x="17" y="40" width="1" height="1.5" fill="#9a9a90" opacity="0.85"/>
<rect x="109" y="116" width="1.5" height="3" fill="#4a4636" opacity="0.85"/>
<rect x="105" y="25" width="1" height="3" fill="#4a4636" opacity="0.85"/>
<rect x="172" y="52" width="1.5" height="1.5" fill="#7a6a38" opacity="0.85"/>
<rect x="10" y="52" width="1" height="1" fill="#8c7a3a" opacity="0.85"/>
<rect x="50" y="104" width="1" height="3" fill="#4a4636" opacity="0.85"/>
<rect x="6" y="44" width="1.5" height="1" fill="#5e5a48" opacity="0.85"/>
<rect x="76" y="110" width="2" height="2" fill="#3c3a2c" opacity="0.85"/>
<rect x="200" y="76" width="2" height="3" fill="#4a4636" opacity="0.85"/>
<rect x="58" y="123" width="1" height="1.5" fill="#4a4636" opacity="0.85"/>
<rect x="106" y="73" width="1" height="2" fill="#3c3a2c" opacity="0.85"/>
<rect x="53" y="76" width="1.5" height="2" fill="#5e5a48" opacity="0.85"/>
<rect x="108" y="15" width="1" height="3" fill="#9a9a90" opacity="0.85"/>
<rect x="91" y="65" width="1" height="1" fill="#4a4636" opacity="0.85"/>
<rect x="72" y="83" width="1" height="1" fill="#7a6a38" opacity="0.85"/>
<rect x="63" y="58" width="1.5" height="1" fill="#7a6a38" opacity="0.85"/>
<rect x="53" y="108" width="1.5" height="1.5" fill="#7a6a38" opacity="0.85"/>
<rect x="125" y="123" width="2" height="1.5" fill="#4a4636" opacity="0.85"/>
<rect x="66" y="109" width="1.5" height="1.5" fill="#9a9a90" opacity="0.85"/>
<rect x="68" y="87" width="1" height="2" fill="#5e5a48" opacity="0.85"/>
<rect x="183" y="104" width="1" height="3" fill="#5e5a48" opacity="0.85"/>
<rect x="69" y="32" width="1.5" height="3" fill="#7a6a38" opacity="0.85"/>
<rect x="179" y="79" width="1" height="1.5" fill="#3c3a2c" opacity="0.85"/>
<rect x="25" y="128" width="1.5" height="2" fill="#3c3a2c" opacity="0.85"/>
<rect x="42" y="90" width="1" height="1" fill="#6e737a" opacity="0.85"/>
<rect x="99" y="53" width="1" height="2" fill="#3c3a2c" opacity="0.85"/>
<rect x="87" y="46" width="1" height="3" fill="#7a6a38" opacity="0.85"/>
<rect x="180" y="30" width="1" height="3" fill="#5e5a48" opacity="0.85"/>
<rect x="71" y="35" width="1" height="2" fill="#5e5a48" opacity="0.85"/>

</g>
 </defs>
</svg>

<div class="abs" style="left:0;top:1268px;width:1442px;height:8px;background:#828282"></div>
<div class="t" style="left:214px;top:1258px;font-size:33px;color:#151515">ssh-keygen</div>
<div class="abs" style="left:1420px;top:1100px;width:22px;height:63px;background:#909090"></div>
<div class="abs" style="left:1420px;top:1163px;width:22px;height:1px;background:#555"></div>
<div class="t" style="left:1434.5px;top:1129px;font-size:33px;color:#3a3a35">s</div>
<div id="win">
  <div id="side">
    <div class="tl r" style="left:40px"></div>
    <div class="tl y" style="left:80px"></div>
    <div class="tl g" style="left:120px"></div>
  </div>
  <div id="hdr"></div>
</div>

<!-- notch on header separator -->
<svg class="abs" style="left:792px;top:417px" width="42" height="22" viewBox="0 0 42 22">
  <path d="M2 20.5 L21 1.5 L40 20.5" fill="#a7a7a6" stroke="#90908f" stroke-width="1.1"/>
  <rect x="2.6" y="20" width="36.8" height="2" fill="#a7a7a6"/>
</svg>

<!-- search panel (undimmed) -->
<div class="abs" style="left:14px;top:115px;width:417px;height:510px;background:#e1e0df">
  <div class="abs" style="left:4px;top:3px;width:406px;height:68px;border-radius:15px;background:#d6d5d4;border:7px solid #80a4ea"></div>
  <svg class="abs" style="left:20px;top:20px" width="32" height="32" viewBox="0 0 32 32">
    <circle cx="14.4" cy="15" r="8.8" fill="none" stroke="#23211a" stroke-width="2.4"/>
    <path d="M21 21.6 L27.6 28.4" stroke="#23211a" stroke-width="2.6" stroke-linecap="round"/>
  </svg>
  <div class="t" style="left:63.5px;top:25.7px;font-size:27px;letter-spacing:0.25px;color:#23211a">keybo</div>
  <div class="abs" style="left:135px;top:21px;width:4px;height:32px;background:#0a7aff;border-radius:2px"></div>
  <svg class="abs" style="left:362px;top:24px" width="28" height="28" viewBox="0 0 28 28">
    <circle cx="14" cy="14" r="13" fill="#23211a"/>
    <path d="M9.5 9.5 L18.5 18.5 M18.5 9.5 L9.5 18.5" stroke="#dcdcd8" stroke-width="2" stroke-linecap="round"/>
  </svg>
  <div class="abs" style="left:12px;top:83px;width:390px;height:56px;border-radius:10px;background:#c9c9c8"></div>
  <svg class="abs" style="left:24px;top:91px" width="40" height="40" viewBox="0 0 40 40">
    <defs><linearGradient id="ig" x1="0" y1="0" x2="0" y2="1"><stop offset="0" stop-color="#3597ff"/><stop offset="1" stop-color="#0a7aff"/></linearGradient></defs>
    <rect width="40" height="40" rx="9" fill="url(#ig)"/>
    <circle cx="20" cy="20" r="6.4" fill="#fff"/>
    <g stroke="#fff" stroke-width="2.2" stroke-linecap="round">
      <path d="M20 6.5V10.5M20 29.5V33.5M6.5 20H10.5M29.5 20H33.5M10.5 10.5L13.3 13.3M26.7 26.7L29.5 29.5M29.5 10.5L26.7 13.3M13.3 26.7L10.5 29.5"/>
    </g>
  </svg>
  <div class="t" style="left:73.4px;top:96.6px;font-size:26px;transform:scaleX(0.88);color:#3d3d3d">디스플레이</div>
  <div class="t" style="left:72.7px;top:153.4px;font-size:26px;transform:scaleX(0.886);color:#60605c">유니버설 컨트롤</div>
</div>

<!-- header -->
<svg class="abs" style="left:480px;top:50px" width="100" height="40" viewBox="0 0 100 40">
  <path d="M20.5 6 L6.5 19 L20.5 32" fill="none" stroke="#4e4e4c" stroke-width="3" stroke-linecap="round" stroke-linejoin="round"/>
  <path d="M79.5 6 L93.5 19 L79.5 32" fill="none" stroke="#7b7b7a" stroke-width="3" stroke-linecap="round" stroke-linejoin="round"/>
</svg>
<div class="t" style="left:614px;top:55px;font-size:28px;font-weight:bold;transform:scaleX(0.94);color:#2d2d28;">디스플레이</div>

<!-- laptop -->
<div class="abs" style="left:723px;top:212px;width:180px;height:125px;border-radius:6px 6px 0 0;background:#14140e"></div>
<svg class="abs" style="left:725px;top:215px" width="177" height="113" viewBox="15 1.5 199 127" preserveAspectRatio="none"><use href="#forestg"/></svg>
<div class="abs" style="left:803px;top:214px;width:20px;height:5px;border-radius:0 0 3px 3px;background:#14140e"></div>
<div class="abs" style="left:698px;top:335px;width:230px;height:13px;border-radius:2px 2px 7px 7px;background:linear-gradient(#3a3b30,#23241c 60%,#1a1b14);box-shadow:0 1px 2px rgba(0,0,0,.3)"></div>
<div class="abs" style="left:803px;top:337px;width:20px;height:2px;background:#4a4b42"></div>

<!-- monitor -->
<div class="abs" style="left:1021px;top:338px;width:80px;height:12px;border-radius:50%;background:linear-gradient(#5a5a52,#a8a8a0);border:1px solid #3a3a34"></div>
<div class="abs" style="left:941px;top:199px;width:240px;height:144px;border-radius:4px;background:#14140e"></div>
<svg class="abs" style="left:948px;top:206px" width="226" height="130" viewBox="0 0 226 130" preserveAspectRatio="none"><use href="#forestg"/></svg>

<div class="abs" style="left:478px;top:367px;width:98px;height:41px;border-radius:8px;background:#b5b5b4;box-shadow:0 0.5px 2px rgba(0,0,0,.3)"></div>
<div class="t" style="left:492.6px;top:373.8px;font-size:24px;transform:scaleX(1.005);color:#222;">정렬...</div>
<div class="t" style="left:730.7px;top:374px;font-size:25px;font-weight:bold;transform:scaleX(0.918);color:#222;">내장 디스플레이</div>
<div class="t" style="left:991.2px;top:374.2px;font-size:27px;font-weight:bold;letter-spacing:-0.75px;color:#222;">LG HDR 4K</div>

<!-- card 1 -->
<div class="card" style="top:478px;height:290px"></div>
<div class="t" style="left:497.5px;top:501px;font-size:25px;transform:scaleX(0.916);">다음으로 사용</div>
<div class="t" style="left:1169.5px;top:501px;font-size:25px;transform:scaleX(0.917);">메인 디스플레이</div>
<div class="stepper" style="top:500px"></div>
<svg class="abs" style="left:1341px;top:500px" width="31" height="32" viewBox="0 0 31 32">
  <path d="M9.3 12.6 L15.2 6.4 L21.1 12.6 M9.3 19.2 L15.2 25.4 L21.1 19.2" fill="none" stroke="#1e1e19" stroke-width="2.4" stroke-linecap="round" stroke-linejoin="round"/>
</svg>
<div class="sep" style="top:550px"></div>

<div class="thumb" style="left:535px;top:596px">
  <div class="dot r" style="left:16px;top:10px;width:24px;height:24px"></div>
  <div class="dot y" style="left:56px;top:10px;width:24px;height:24px"></div>
  <div class="bar" style="top:42px"></div>
  <div class="tt" style="left:13.5px;top:53px;font-size:25px;letter-spacing:0.2px">Here’s</div>
</div>
<div class="thumb" style="left:714px;top:596px">
  <div class="dot r" style="left:12px;top:7px;width:20px;height:20px"></div>
  <div class="dot y" style="left:46px;top:7px;width:20px;height:20px"></div>
  <div class="dot g" style="left:80px;top:7px;width:20px;height:20px"></div>
  <div class="bar" style="top:35px"></div>
  <div class="tt" style="left:12px;top:43px;font-size:20px;line-height:25px;letter-spacing:0.5px">Here’s to the<br>troublemakers</div>
</div>
<div class="thumb" style="left:893px;top:596px">
  <div class="dot r" style="left:10px;top:7px;width:16px;height:16px"></div>
  <div class="dot y" style="left:36px;top:7px;width:16px;height:16px"></div>
  <div class="dot g" style="left:62px;top:7px;width:16px;height:16px"></div>
  <div class="bar" style="top:29px"></div>
  <div class="tt" style="left:8px;top:35px;font-size:16px;line-height:20px;letter-spacing:0.5px">Here’s to the<br>troublemakers<br>ones who see</div>
</div>
<div class="abs" style="left:1068px;top:591px;width:97px;height:98px;border-radius:14px;background:#2c63aa"></div>
<div class="thumb" style="left:1072px;top:596px;box-shadow:none;border-radius:9px">
  <div class="dot r" style="left:8px;top:5px;width:12px;height:12px"></div>
  <div class="dot y" style="left:28px;top:5px;width:12px;height:12px"></div>
  <div class="dot g" style="left:48px;top:5px;width:12px;height:12px"></div>
  <div class="bar" style="top:21px"></div>
  <div class="tt" style="left:7px;top:27px;font-size:12.5px;line-height:15px;letter-spacing:0.1px">Here’s to the crazy<br>troublemakers. The<br>ones who see things<br>rules. And they have</div>
</div>
<div class="thumb" style="left:1251px;top:596px">
  <div class="dot r" style="left:5px;top:2px;width:9px;height:9px"></div>
  <div class="dot y" style="left:18px;top:2px;width:9px;height:9px"></div>
  <div class="dot g" style="left:31px;top:2px;width:9px;height:9px"></div>
  <div class="bar" style="top:13px"></div>
  <div class="tt" style="left:5px;top:17px;font-size:8.5px;line-height:10px;letter-spacing:0.05px">Here’s to the crazy ones<br>troublemakers. The round<br>ones who see things differ<br>rules. And they have no re<br>can quote them, disagree<br>them. About the only thing<br>Because they change thin</div>
</div>
<div class="abs" style="left:707px;top:712px;width:295px;height:2px;background:#979796"></div>
<div class="t" style="left:527.4px;top:701.9px;font-size:23px;transform:scaleX(0.859);">텍스트 크게</div>
<div class="t" style="left:1073px;top:703px;font-size:23px;font-weight:bold;transform:scaleX(0.866);">기본 설정</div>
<div class="t" style="left:1252.5px;top:702px;font-size:23px;transform:scaleX(0.862);">추가 공간</div>

<!-- card 2 -->
<div class="card" style="top:788px;height:288px"></div>
<div class="t" style="left:495.7px;top:809.8px;font-size:26px;transform:scaleX(0.952);">밝기</div>
<svg class="abs" style="left:890px;top:800px" width="500" height="54" viewBox="0 0 500 54">
  <g fill="#505050">
    <circle cx="22" cy="26.5" r="8"/>
    <circle cx="22" cy="12" r="1.7"/><circle cx="22" cy="41" r="1.7"/>
    <circle cx="7.5" cy="26.5" r="1.7"/><circle cx="36.5" cy="26.5" r="1.7"/>
    <circle cx="11.7" cy="16.2" r="1.7"/><circle cx="32.3" cy="16.2" r="1.7"/>
    <circle cx="11.7" cy="36.8" r="1.7"/><circle cx="32.3" cy="36.8" r="1.7"/>
  </g>
  <rect x="50" y="22.5" width="386" height="7.5" rx="3.75" fill="#9c9c9b" stroke="#959594" stroke-width="0.6"/>
  <rect x="50" y="22.5" width="240" height="7.5" rx="3.75" fill="#0a56b3"/>
  <circle cx="286" cy="26" r="19.6" fill="#b4b4b3" stroke="#8e8e8d" stroke-width="1"/>
  <g fill="#505050"><circle cx="464.6" cy="26.2" r="8.2"/></g>
  <g stroke="#505050" stroke-width="3" stroke-linecap="round">
    <path d="M464.6 9.5V13.5M464.6 39V43M448 26.2H452M477 26.2H481M452.8 14.4L455.7 17.3M473.5 35.1L476.4 38M476.4 14.4L473.5 17.3M455.7 35.1L452.8 38"/>
  </g>
</svg>
<div class="sep" style="top:867px"></div>
<div class="t" style="left:497.3px;top:892.3px;font-size:25px;transform:scaleX(0.923);">자동으로 밝기 조절</div>
<div class="toggle" style="top:893px"></div>
<div class="sep" style="top:943px"></div>
<div class="t" style="left:498px;top:968.5px;font-size:26px;letter-spacing:0.5px;">True Tone</div>
<div class="toggle" style="top:969px"></div>
<div class="t" style="left:497px;top:1003.4px;font-size:21px;transform:scaleX(0.92);color:#5e5e5d;">디스플레이를 주변광에 맞춰 색상이 다른 환경에서도 일관적으로 보이도록 자동으로</div>
<div class="t" style="left:497px;top:1030px;font-size:21px;transform:scaleX(0.938);color:#5e5e5d;">조정합니다.</div>

<!-- card 3 -->
<div class="card" style="top:1098px;height:70px"></div>
<div class="t" style="left:496.8px;top:1118px;font-size:26px;transform:scaleX(0.901);">프리셋</div>
<div class="t" style="left:925px;top:1119.8px;font-size:26px;letter-spacing:0.5px;">Apple XDR Display (P3-1600 nits)</div>
<div class="stepper" style="top:1118px"></div>
<svg class="abs" style="left:1341px;top:1118px" width="31" height="32" viewBox="0 0 31 32">
  <path d="M9.3 12.6 L15.2 6.4 L21.1 12.6 M9.3 19.2 L15.2 25.4 L21.1 19.2" fill="none" stroke="#1e1e19" stroke-width="2.4" stroke-linecap="round" stroke-linejoin="round"/>
</svg>

<!-- card 4 -->
<div class="card" style="top:1189px;height:71px"></div>
<div class="t" style="left:497.8px;top:1211.2px;font-size:25px;transform:scaleX(0.914);">재생률</div>
<div class="t" style="left:1208.2px;top:1211.7px;font-size:26px;letter-spacing:1.0px;">ProMotion</div>
<div class="stepper" style="top:1209px"></div>
<svg class="abs" style="left:1341px;top:1209px" width="31" height="32" viewBox="0 0 31 32">
  <path d="M9.3 12.6 L15.2 6.4 L21.1 12.6 M9.3 19.2 L15.2 25.4 L21.1 19.2" fill="none" stroke="#1e1e19" stroke-width="2.4" stroke-linecap="round" stroke-linejoin="round"/>
</svg>

</body></html>
